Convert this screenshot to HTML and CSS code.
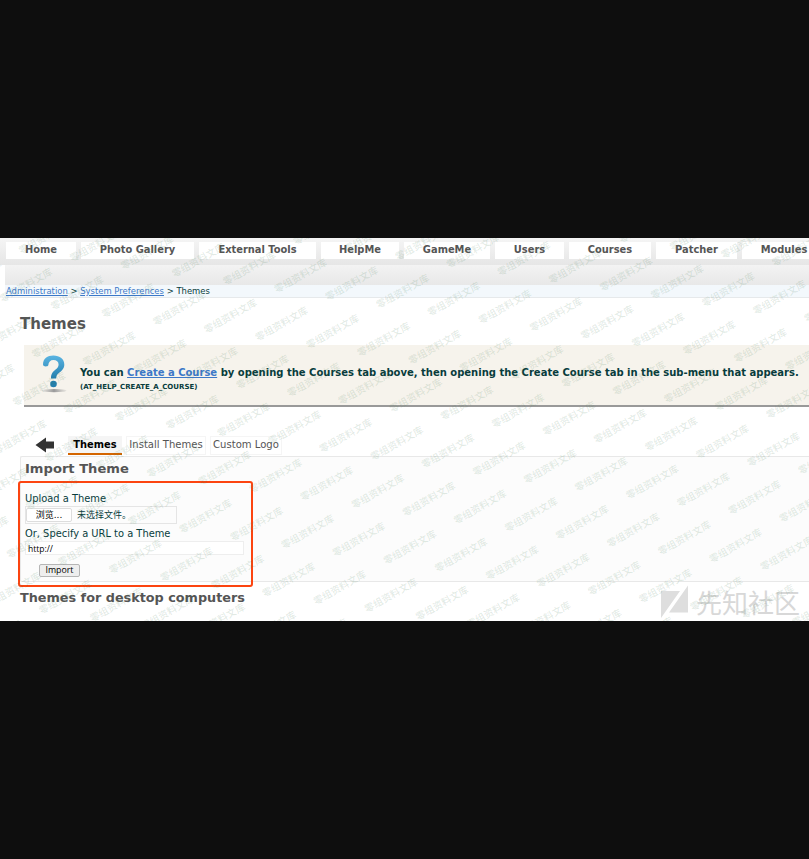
FILE: index.html
```
<!DOCTYPE html>
<html lang="en">
<head>
<meta charset="utf-8">
<title>Themes</title>
<link rel="stylesheet" href="styles.css">
</head>
<body>
<main class="screen">
  <nav class="nav">
    <a class="w70">Home</a><a class="w113">Photo Gallery</a><a class="w117">External Tools</a><a class="w78">HelpMe</a><a class="w86">GameMe</a><a class="w69">Users</a><a class="w82">Courses</a><a class="w81">Patcher</a><a class="w90">Modules</a>
  </nav>
  <div class="subnav"></div>
  <div class="crumbs"><a>Administration</a> &gt; <a>System Preferences</a> &gt; Themes</div>
  <h1>Themes</h1>
  <section class="help">
    <svg class="question" width="26" height="40" viewBox="0 0 26 40">
      <defs>
        <linearGradient id="blue" x1="0" y1="0" x2="0" y2="1"><stop offset="0" stop-color="#5bb4e2"/><stop offset="1" stop-color="#237fae"/></linearGradient>
        <linearGradient id="shade"><stop offset="0" stop-color="#aaa" stop-opacity=".2"/><stop offset=".5" stop-color="#999"/><stop offset="1" stop-color="#aaa" stop-opacity=".2"/></linearGradient>
      </defs>
      <ellipse cx="13" cy="36.7" rx="12.5" ry="1.6" fill="url(#shade)"/>
      <path d="M2 10.5C2 4.5 6.500 1.500 12.300 1.500C19 1.500 23.300 5.200 23.300 10.500C23.300 14.500 21 16.700 18.200 18.800C15.800 20.600 15.300 21.700 15.200 24.500H10C10 20.400 11 18.500 14 16C16.400 14 17.600 12.900 17.600 10.500C17.600 7.700 15.500 6 12.400 6C9.300 6 7.600 8 7.300 11.300C6.500 13 2.300 13 2 10.500Z" fill="url(#blue)"/>
      <circle cx="12.500" cy="30" r="3.300" fill="#237fae"/>
    </svg>
    <div>
      <p class="tip">You can <a>Create a Course</a> by opening the Courses tab above, then opening the Create Course tab in the sub-menu that appears.</p>
      <p class="code">(AT_HELP_CREATE_A_COURSE)</p>
    </div>
  </section>
  <div class="tabs">
    <svg class="back" width="20" height="16" viewBox="0 0 20 16"><path d="M.5 8L11 .5V4.500H19V11.500H11V15.500Z" fill="#333"/></svg>
    <a class="tab active">Themes</a>
    <a class="tab install">Install Themes</a>
    <a class="tab logo">Custom Logo</a>
  </div>
  <section class="panel">
    <h2>Import Theme</h2>
    <form class="form">
      <label>Upload a Theme</label>
      <div class="file"><span class="browse">浏览...</span><span class="none">未选择文件。</span></div>
      <label class="urllabel">Or, Specify a URL to a Theme</label>
      <div class="url">http://</div>
      <span class="submit">Import</span>
    </form>
  </section>
  <h2 class="desktop">Themes for desktop computers</h2>
  <div class="brand">
    <svg width="28" height="34" viewBox="0 0 28 34"><path d="M0 6H19L0 33ZM27 .5V27.500H8Z" fill="#dedede"/></svg>
    <span>先知社区</span>
  </div>
  <svg class="marks" id="marks" width="809" height="383" aria-hidden="true"></svg>
</main>
<script src="marks.js"></script>
</body>
</html>
```
FILE: marks.js
```
// Tiles the diagonal text stamp over the page on a skewed lattice.
const svg = document.getElementById('marks');
for (let row = -8; row <= 8; row++) {
  for (let col = -12; col <= 16; col++) {
    const x = 326.7 + col * 51.1 - row * 19;
    const y = 245.7 + col * 7.75 + row * 48.1;
    if (x < -30 || x > 839 || y < -18 || y > 401) continue;
    const t = document.createElementNS('http://www.w3.org/2000/svg', 'text');
    t.setAttribute('transform', `translate(${x} ${y}) rotate(-29.5)`);
    t.setAttribute('y', 3.5);
    t.textContent = '零组资料文库';
    svg.appendChild(t);
  }
}
```
FILE: styles.css
```
* { box-sizing: border-box; }
body {
  margin: 0;
  height: 859px;
  padding-top: 238px;
  overflow: hidden;
  background: #0e0e0e;
  font-family: "DejaVu Sans", "Noto Sans CJK SC", sans-serif;
  color: #083c3c;
}
h1, h2, p { margin: 0; }
h1, h2 { color: #555; font-weight: bold; white-space: nowrap; }
.screen {
  position: relative;
  width: 809px;
  height: 383px;
  overflow: hidden;
  background: #fff;
}
.nav {
  display: flex;
  gap: 5px;
  height: 27px;
  padding: 4px 0 0 6px;
  background: linear-gradient(#f5f5f5, #e6e6e6);
}
.nav a {
  flex: none;
  height: 17px;
  background: #fff;
  color: #555;
  font-size: 9.9px;
  font-weight: bold;
  line-height: 15px;
  text-align: center;
  white-space: nowrap;
}
.w70 { width: 70px; }
.w113 { width: 113px; }
.w117 { width: 117px; }
.w78 { width: 78px; }
.w86 { width: 86px; }
.w69 { width: 69px; }
.w82 { width: 82px; }
.w81 { width: 81px; }
.w90 { width: 84px; }
.subnav {
  height: 20px;
  margin-left: 5px;
  background: linear-gradient(#f3f3f3, #e8e8e8);
}
.crumbs {
  height: 13px;
  margin-left: 5px;
  padding-left: 1px;
  border-bottom: 1px solid #e6e9eb;
  background: #f3f8fc;
  font-size: 8.45px;
  line-height: 12px;
  white-space: nowrap;
}
a { color: #3c78c8; }
.crumbs a, .tip a { text-decoration: underline; }
h1 { margin: 16px 0 0 20px; font-size: 15px; line-height: 20px; }
.help {
  display: flex;
  height: 62px;
  margin: 11px 0 0 24px;
  border-bottom: 2px solid #999;
  background: #f6f3ec;
}
.question { flex: none; margin: 9px 13px 0 17px; }
.tip {
  margin-top: 21px;
  font-size: 10px;
  font-weight: bold;
  line-height: 14px;
  white-space: nowrap;
}
.code { margin-top: 2px; font-size: 7px; font-weight: bold; line-height: 10px; }
.tabs {
  display: flex;
  height: 19px;
  margin: 29px 0 0 35px;
}
.back { margin-top: 1px; }
.tab {
  height: 19px;
  border: 1px solid #f5f5f5;
  color: #555;
  font-size: 10.05px;
  line-height: 16px;
  text-align: center;
  white-space: nowrap;
}
.active {
  width: 54px;
  margin-left: 13px;
  border: 0;
  border-bottom: 2px solid #d46500;
  background: #f5f5f5;
  color: #000;
  font-size: 9.9px;
  font-weight: bold;
  line-height: 18px;
}
.install { width: 80px; margin-left: 4px; }
.logo { width: 72px; margin-left: 4px; }
.panel {
  height: 126px;
  margin: 1px 0 0 20px;
  padding: 3px 0 0 5px;
  border: 1px solid #e8e8e8;
  border-right: 0;
  border-radius: 2px 0 0 2px;
  background: #fcfcfc;
}
.panel h2 { margin-left: -1px; font-size: 13.1px; line-height: 18px; }
.form {
  display: flex;
  flex-direction: column;
  align-items: flex-start;
  width: 235px;
  height: 106px;
  margin: 3px 0 0 -8px;
  padding: 9px 0 0 5px;
  border: 2px solid #fc4410;
  border-radius: 3px;
  font-size: 9.9px;
}
label { line-height: 14px; }
.file {
  display: flex;
  align-items: center;
  width: 152px;
  height: 18px;
  border: 1px solid #e5e5e5;
  font-size: 9px;
}
.browse {
  width: 46px;
  height: 14px;
  border: 1px solid #ddd;
  border-radius: 2px;
  background: #fff;
  color: #000;
  line-height: 12px;
  text-align: center;
}
.none { margin-left: 5px; line-height: 14px; }
.urllabel { margin-top: 3px; }
.url {
  width: 219px;
  height: 14px;
  padding-left: 2px;
  border: 1px solid #eee;
  background: #fff;
  color: #000;
  font: 8.5px/13px "Open Sans", sans-serif;
}
.submit {
  width: 41px;
  height: 13px;
  margin: 9px 0 0 14px;
  border: 1px solid #b5b5b5;
  border-radius: 2px;
  background: #eee;
  color: #000;
  font: 8.8px/11px "Open Sans", sans-serif;
  text-align: center;
}
.desktop { margin: 6px 0 0 20px; font-size: 12.8px; line-height: 20px; }
.brand {
  position: absolute;
  left: 661px;
  top: 347px;
  display: flex;
  gap: 7px;
  color: #d8d8d8;
  font: 26px/34px "Noto Sans CJK SC", sans-serif;
  white-space: nowrap;
}
.marks { position: absolute; left: 0; top: 0; }
.marks text {
  fill: rgba(70, 125, 85, .16);
  font: 500 9.8px "Noto Sans CJK SC", sans-serif;
  text-anchor: middle;
}
```
